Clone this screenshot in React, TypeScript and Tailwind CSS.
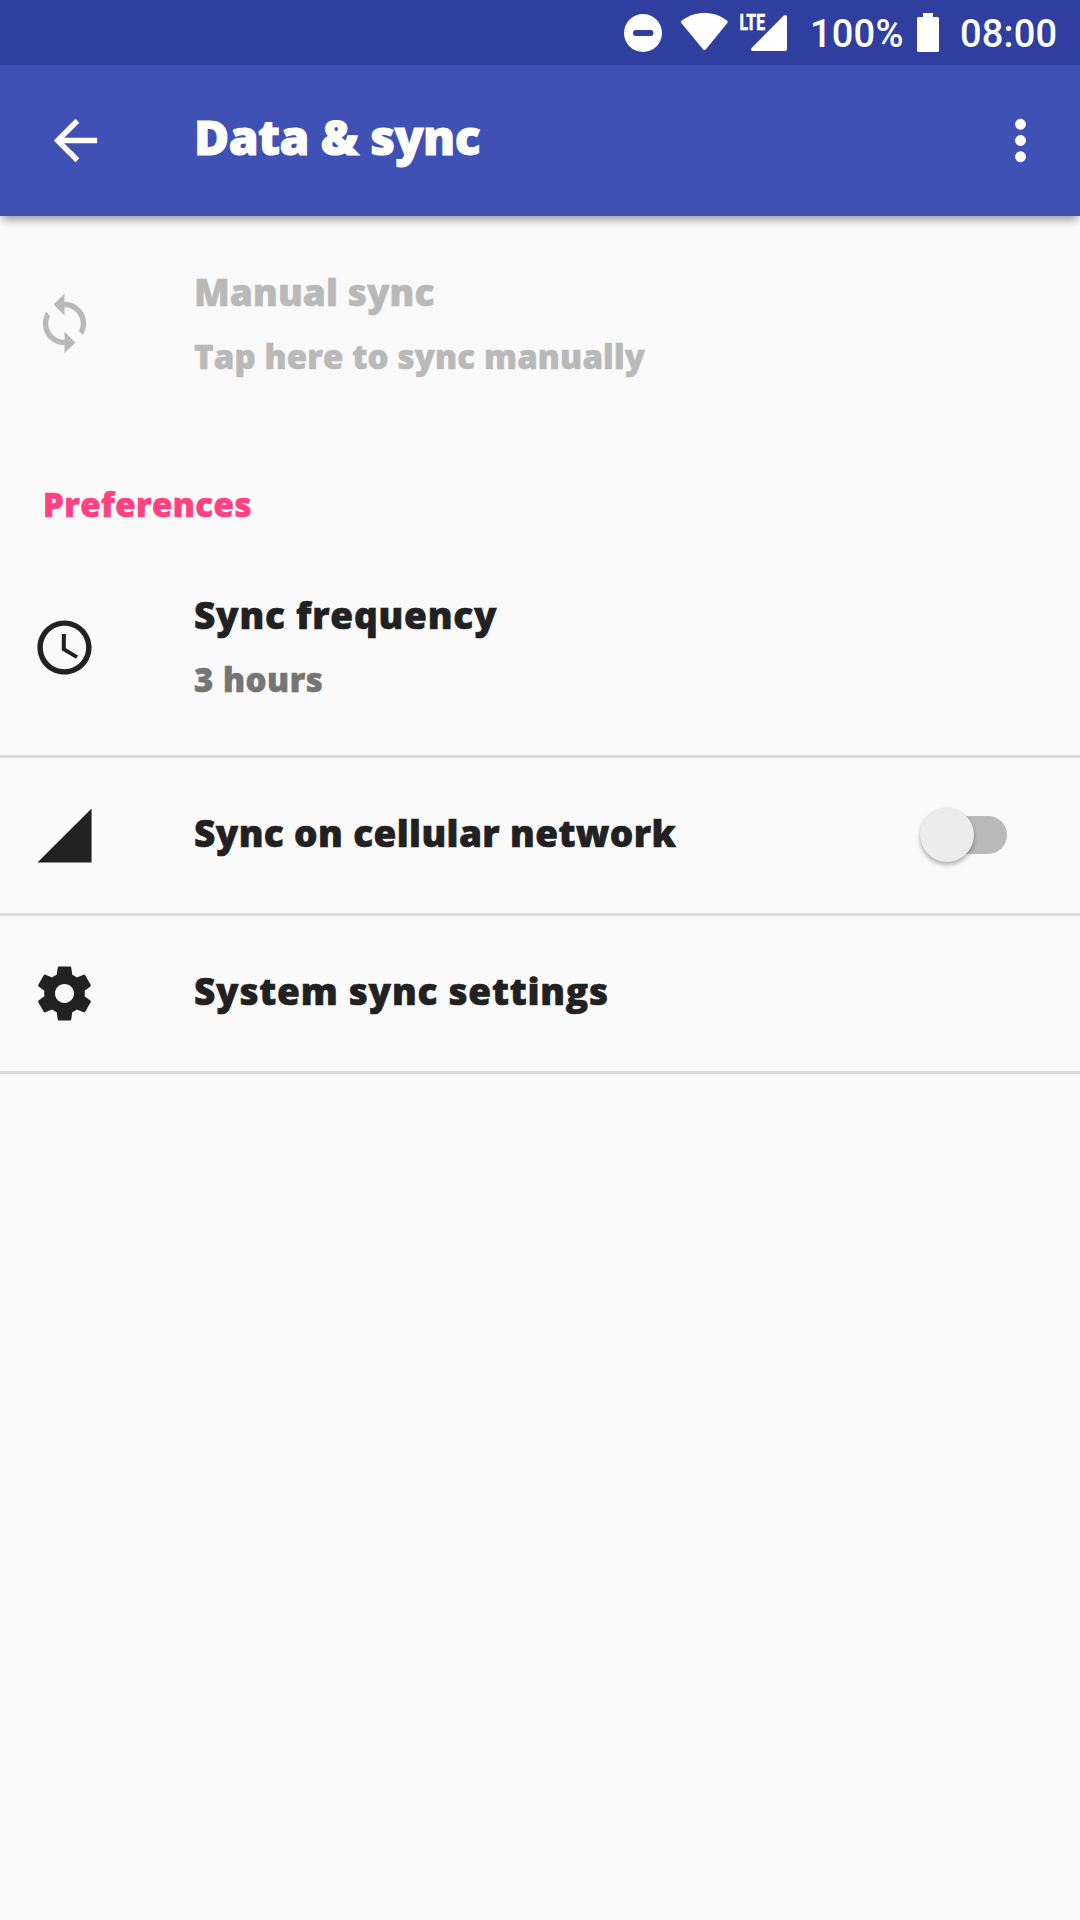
import React from 'react';

const ICONS = {
  back: 'M20 11H7.83l5.59-5.59L12 4l-8 8 8 8 1.41-1.41L7.83 13H20v-2z',
  more: 'M12 8c1.1 0 2-.9 2-2s-.9-2-2-2-2 .9-2 2 .9 2 2 2zm0 2c-1.1 0-2 .9-2 2s.9 2 2 2 2-.9 2-2-.9-2-2-2zm0 6c-1.1 0-2 .9-2 2s.9 2 2 2 2-.9 2-2-.9-2-2-2z',
  sync: 'M12 4V1L8 5l4 4V6c3.31 0 6 2.69 6 6 0 1.01-.25 1.97-.7 2.8l1.46 1.46C19.54 15.03 20 13.57 20 12c0-4.42-3.58-8-8-8zm0 14c-3.31 0-6-2.69-6-6 0-1.01.25-1.97.7-2.8L5.24 7.74C4.46 8.97 4 10.43 4 12c0 4.42 3.58 8 8 8v3l4-4-4-4v3z',
  clock: 'M11.99 2C6.47 2 2 6.48 2 12s4.47 10 9.99 10C17.52 22 22 17.52 22 12S17.52 2 11.99 2zM12 20c-4.42 0-8-3.58-8-8s3.58-8 8-8 8 3.58 8 8-3.58 8-8 8zm.5-13H11v6l5.25 3.15.75-1.23-4.5-2.67z',
  cell: 'M2 22h20V2z',
  gear: 'M19.43 12.98c.04-.32.07-.64.07-.98s-.03-.66-.07-.98l2.11-1.65c.19-.15.24-.42.12-.64l-2-3.46c-.12-.22-.39-.3-.61-.22l-2.49 1c-.52-.4-1.08-.73-1.69-.98l-.38-2.65C14.46 2.18 14.25 2 14 2h-4c-.25 0-.46.18-.49.42l-.38 2.65c-.61.25-1.17.59-1.69.98l-2.49-1c-.23-.09-.49 0-.61.22l-2 3.46c-.13.22-.07.49.12.64l2.11 1.65c-.04.32-.07.65-.07.98s.03.66.07.98l-2.11 1.65c-.19.15-.24.42-.12.64l2 3.46c.12.22.39.3.61.22l2.49-1c.52.4 1.08.73 1.69.98l.38 2.65c.03.24.24.42.49.42h4c.25 0 .46-.18.49-.42l.38-2.65c.61-.25 1.17-.59 1.69-.98l2.49 1c.23.09.49 0 .61-.22l2-3.46c.12-.22.07-.49-.12-.64l-2.11-1.65zM12 15.5c-1.93 0-3.5-1.57-3.5-3.5s1.57-3.5 3.5-3.5 3.5 1.57 3.5 3.5-1.57 3.5-3.5 3.5z',
};

function Icon({ name }: { name: keyof typeof ICONS }) {
  return (
    <svg viewBox="0 0 24 24" className="size-[65px] shrink-0" fill="currentColor">
      <path d={ICONS[name]} />
    </svg>
  );
}

function StatusBar() {
  return (
    <div className="flex h-[65px] items-start justify-end bg-[#303f9f] pr-[23px] font-['Roboto',sans-serif] text-[38px] leading-[65px] font-medium text-white">
      <svg viewBox="0 0 38 65" className="mr-[19px] h-[65px] w-[38px]" fill="currentColor">
        <path fillRule="evenodd" d="M19 14a19 19 0 1 0 0 38a19 19 0 1 0 0-38zM12 30h14.500a3 3 0 0 1 0 6H12a3 3 0 0 1 0-6z" />
      </svg>
      <svg viewBox="0 0 47 65" className="mr-[12px] h-[65px] w-[47px]" fill="currentColor">
        <path d="M0.300 23Q-0.500 21.500 0.800 20.500C8 15.300 15.500 13 23.500 13S39 15.300 46 20.500Q47.200 21.500 46.300 23L25.200 49Q23.500 51 21.800 49Z" />
      </svg>
      <svg viewBox="0 0 48 65" className="mr-[22px] h-[65px] w-[48px]" fill="currentColor">
        <path d="M43.800 15.600Q47 14 47 17V49Q47 51 45 51H13Q10 51 11.600 48Z" />
        <text x="-0.500" y="30" fontSize="22.500" fontWeight="800" stroke="currentColor" strokeWidth="0.500" textLength="25.500" lengthAdjust="spacingAndGlyphs">LTE</text>
      </svg>
      <span className="w-[107px] pt-[2px] tracking-[0.2px]">100%</span>
      <svg viewBox="0 0 22 65" className="mr-[21px] h-[65px] w-[22px]" fill="currentColor">
        <path d="M6 13h10v4h4.500Q22 17 22 18.500V50.500Q22 52 20.500 52H1.500Q0 52 0 50.500V18.500Q0 17 1.500 17H6z" />
      </svg>
      <span className="w-[97px] pt-[2px] tracking-[0.2px]">08:00</span>
    </div>
  );
}

function Row({ icon, className, children }: { icon: keyof typeof ICONS; className: string; children: React.ReactNode }) {
  return (
    <div className={`flex items-center pl-8 ${className}`}>
      <Icon name={icon} />
      <div className="ml-[97px] flex grow items-center justify-between whitespace-nowrap">{children}</div>
    </div>
  );
}

function Divider() {
  return <div className="h-[3px] bg-[#dcdcdc]" />;
}

function Switch() {
  return (
    <div className="mr-[73px] mb-px flex h-[38px] w-[82px] items-center rounded-full bg-[#b9b9b9]">
      <div className="-ml-[5px] size-[54px] rounded-full bg-[#ececec] shadow-[0_3px_4px_rgba(0,0,0,0.28),0_0_2px_rgba(0,0,0,0.1)]" />
    </div>
  );
}

export default function App() {
  return (
    <div className="flex h-[1920px] w-[1080px] flex-col overflow-hidden bg-[#fafafa] font-['Open_Sans',sans-serif] font-extrabold text-[#212121]">
      <StatusBar />
      <header className="z-10 flex h-[151px] shrink-0 items-center bg-[#3f51b5] pr-[27px] pl-[43px] text-white shadow-[0_6px_8px_-2px_rgba(0,0,0,0.36)]">
        <Icon name="back" />
        <h1 className="ml-[86px] grow pb-[7px] text-[48px] leading-none tracking-[-0.6px] [-webkit-text-stroke:1px_currentColor]">Data &amp; sync</h1>
        <Icon name="more" />
      </header>

      <Row icon="sync" className="h-[215px] text-[#b9b9b9] [-webkit-text-stroke:0.6px_currentColor]">
        <div className="leading-[64px]">
          <div className="text-[37px] tracking-[0.1px]">Manual sync</div>
          <div className="pt-px text-[33px] leading-[63px] tracking-[0.16px]">Tap here to sync manually</div>
        </div>
      </Row>

      <h2 className="h-[108px] pt-[50px] pl-[43px] text-[33px] leading-[48px] tracking-[0.45px] text-[#ff4081] [-webkit-text-stroke:0.6px_currentColor]">Preferences</h2>

      <Row icon="clock" className="h-[216px] [-webkit-text-stroke:0.6px_currentColor]">
        <div className="leading-[64px]">
          <div className="text-[37px] tracking-[0.77px]">Sync frequency</div>
          <div className="pt-px text-[33px] tracking-[0.5px] text-[#757575]">3 hours</div>
        </div>
      </Row>
      <Divider />
      <Row icon="cell" className="h-[155px] [-webkit-text-stroke:0.6px_currentColor]">
        <div className="pb-[6px] text-[37px] tracking-[0.37px]">Sync on cellular network</div>
        <Switch />
      </Row>
      <Divider />
      <Row icon="gear" className="h-[155px] [-webkit-text-stroke:0.6px_currentColor]">
        <div className="pb-[6px] text-[37px] tracking-[0.74px]">System sync settings</div>
      </Row>
      <Divider />
    </div>
  );
}
